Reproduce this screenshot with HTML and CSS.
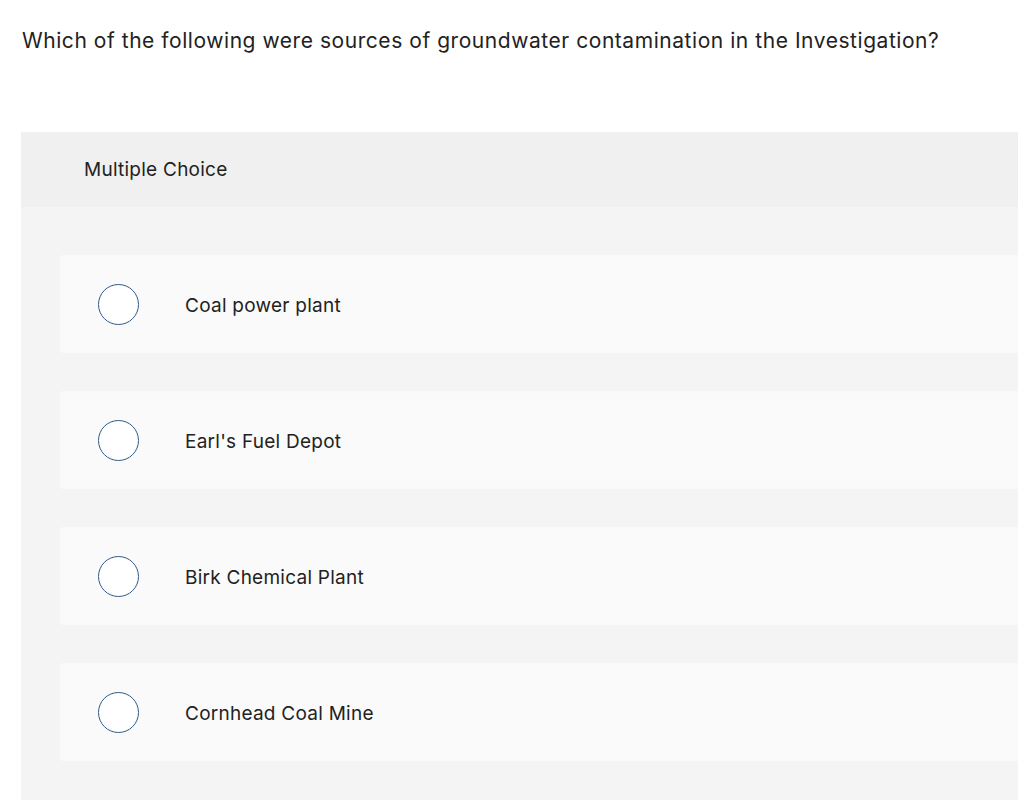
FILE: index.html
```html
<!DOCTYPE html>
<html>
<head>
<meta charset="utf-8">
<link rel="stylesheet" href="styles.css">
</head>
<body>
<div class="page">
  <p class="question">Which of the following were sources of groundwater contamination in the Investigation?</p>
  <section class="panel">
    <header class="panel-head">Multiple Choice</header>
    <div class="panel-body">
      <label class="option"><span class="radio"></span><span class="option-text">Coal power plant</span></label>
      <label class="option"><span class="radio"></span><span class="option-text">Earl's Fuel Depot</span></label>
      <label class="option"><span class="radio"></span><span class="option-text">Birk Chemical Plant</span></label>
      <label class="option"><span class="radio"></span><span class="option-text">Cornhead Coal Mine</span></label>
    </div>
  </section>
</div>
</body>
</html>
```

FILE: styles.css
```css
html, body {
  margin: 0;
  padding: 0;
  background: #ffffff;
}
body {
  font-family: "Inter", "Liberation Sans", sans-serif;
  color: #222222;
  overflow: hidden;
}
.page {
  padding: 0 0 0 21px;
}
.question {
  margin: 0;
  padding: 27px 0 0 1px;
  height: 132px;
  box-sizing: border-box;
  font-size: 21px;
  letter-spacing: 0.55px;
  line-height: 28px;
  color: #222222;
}
.panel {
  background: #f4f4f4;
  min-height: 700px;
}
.panel-head {
  background: #f0f0f0;
  height: 75px;
  display: flex;
  align-items: center;
  padding-left: 63px;
  font-size: 19px;
  letter-spacing: 0.25px;
  color: #222222;
}
.panel-body {
  padding: 48px 0 0 39px;
  display: flex;
  flex-direction: column;
  gap: 38px;
}
.option {
  display: flex;
  align-items: center;
  height: 98px;
  background: #fafafa;
  border-radius: 4px 0 0 4px;
  padding-left: 38px;
}
.radio {
  width: 39px;
  height: 39px;
  border: 1px solid #2d5b8e;
  border-radius: 50%;
  background: #ffffff;
  flex: none;
}
.option-text {
  margin-left: 46px;
  padding-top: 2px;
  font-size: 19px;
  letter-spacing: 0.25px;
  color: #222222;
}
```
